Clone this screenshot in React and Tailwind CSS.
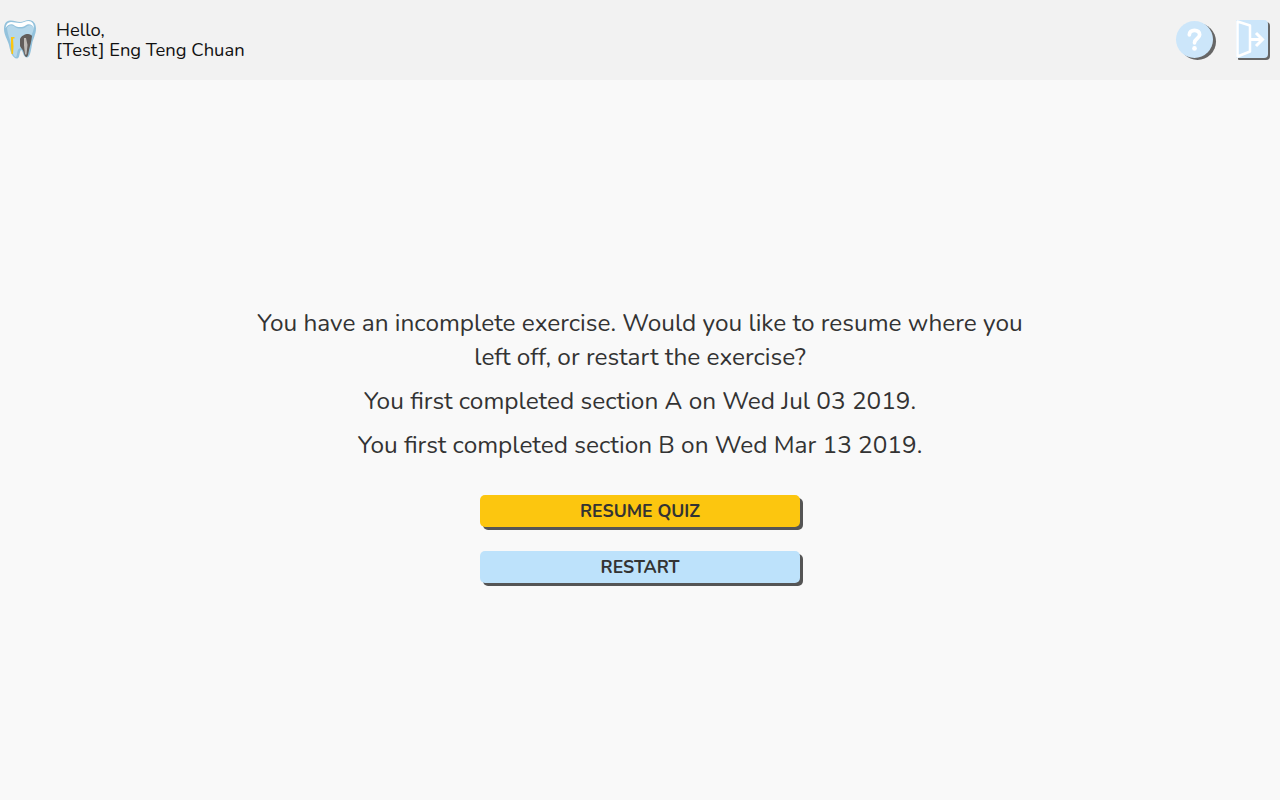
import React from 'react';

// coordinates in the viewBox are the page's own pixels
const ToothLogo = () => (
  <svg width="36" height="42" viewBox="2 19 36 42" className="shrink-0">
    <path d="M11 20.500C6 20 4 24 4 29c0 6 3 9 5 16 1 5 3 13.500 8 13.500 3 0 2-6 4-8.500 2 0 2 7.500 6 7.500 3 0 4-7 5-13 1-6 4-10 4-16 0-5-3-8.500-7-8.500-3 0-6 2-9 2s-6-1.500-9-1.500Z" fill="#93c2dc" />
    <path d="M7 28c2-4 6-3 8-1 3 2 8 2 11 0 2-2 6-3 8 1-1 5-4 9-5 15-1 6-2 13-3 13-2 0-2-5-4-7-1-1-3-1-4 1-1 2-1 7-2 7-3 0-4-7-5-12-1-6-3-9-4-17Z" fill="#b5d7ea" />
    <path d="M11 22c-3 0-5 2-5.500 6 2-3 6-5 9-2.500 3 2 8 2 11 0 3-2.500 7-1 8.500 2.500 0-4-2-7-5.500-7-3 0-6 2-9 2s-5.500-1-8.500-1Z" fill="#fff" />
    <path d="M11 37h3.500v1.500h-1.500l.5 8-.5 7.500h-1.500l-.5-7.500Z" fill="#fcc60f" />
    <path d="M20 39c1-3 5-5 8-5 2 0 3.500 1 4 2-.5 5-2 10-3 14-.5 3-1 7-2.500 7-2 0-2.500-4-3.500-6.500-1-2-3-3-3-5 0-2 0-4 0-6.500Z" fill="#625d5b" />
    <path d="M24 38h2l1.500 7-1 9.500h-1.500l-1-9Z" fill="#bdb9b5" />
  </svg>
);

const HelpIcon = () => (
  <div className="mt-[1px] w-[37px] h-[37px] rounded-full bg-[#cce6fa] shadow-[3px_2px_0_#666] flex items-center justify-center">
    <svg width="15" height="23" viewBox="0 0 16 24" fill="none">
      <path d="M2.500 7c0-3 2.200-4.800 5.500-4.800s5.500 1.800 5.500 4.800c0 4-5.500 4-5.500 8.500" stroke="#fff" strokeWidth="4" strokeLinecap="round" />
      <circle cx="8" cy="21.500" r="2.500" fill="#fff" />
    </svg>
  </div>
);

const ExitIcon = () => (
  <div className="relative w-[32px] h-[38px] rounded-r-[4px] rounded-l-[1px] bg-[#cce6fa] shadow-[2px_2px_0_#666]">
    <svg width="32" height="38" viewBox="0 0 32 38" fill="none" className="absolute left-0 top-0">
      <path d="M1.500 1.500v35l12.500-5V5.500Z" fill="#cce6fa" stroke="#fff" strokeWidth="2.500" strokeLinejoin="round" />
      <path d="M14 19.500h12M20 13l6.500 6.500-6.500 6.500" stroke="#fff" strokeWidth="3" />
    </svg>
  </div>
);

const App = () => {
  return (
    <div className="min-h-screen bg-[#f9f9f9] font-['Nunito','Lato','Noto_Sans',sans-serif] text-[#333]">
      {/* Header */}
      <header className="h-20 bg-[#f2f2f2] flex items-center justify-between pl-[2px] pr-[12px]">
        <div className="flex items-center">
          <ToothLogo />
          <div className="ml-[18px] text-[18.4px] leading-5 text-[#111]">
            <div>Hello,</div>
            <div>[Test] Eng Teng Chuan</div>
          </div>
        </div>
        <div className="flex items-start gap-[23px] mb-[2px]">
          <HelpIcon />
          <ExitIcon />
        </div>
      </header>

      {/* Prompt */}
      <main className="flex flex-col items-center pt-[226px]">
        <div className="w-[800px] text-center text-[24.4px] leading-[34.2px]">
          <p className="mb-[9.600px]">You have an incomplete exercise. Would you like to resume where you left off, or restart the exercise?</p>
          <p className="mb-[9.600px]">You first completed section A on Wed Jul 03 2019.</p>
          <p>You first completed section B on Wed Mar 13 2019.</p>
        </div>
        <button className="mt-[33px] w-[320px] h-8 rounded-[5px] bg-[#fcc60f] shadow-[3px_3px_0_#555] text-[17.700px] font-bold">RESUME QUIZ</button>
        <button className="mt-6 w-[320px] h-8 rounded-[5px] bg-[#bde2fb] shadow-[3px_3px_0_#555] text-[17.700px] font-bold">RESTART</button>
      </main>
    </div>
  );
};

export default App;
